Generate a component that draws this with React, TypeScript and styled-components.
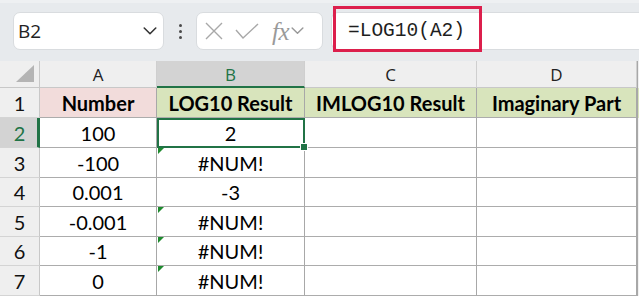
import React from "react";
import styled, { createGlobalStyle } from "styled-components";

const Global = createGlobalStyle`
  html, body {
    margin: 0;
    padding: 0;
    overflow: hidden;
    background: #ffffff;
  }
`;

const GREEN = "#217346";
const CELL_FONT = `Lato, "Liberation Sans", sans-serif`;

const Page = styled.div`
  width: 639px;
  height: 298px;
  display: flex;
  flex-direction: column;
  background: #fff;
`;

const Toolbar = styled.div`
  position: relative;
  height: 61px;
  flex: none;
  box-sizing: border-box;
  display: flex;
  align-items: flex-start;
  padding: 9px 0 0 13px;
  background: #e7eaed;
  border-top: 3px solid #eef0f2;
`;

const NameBox = styled.div`
  width: 151px;
  height: 38px;
  box-sizing: border-box;
  display: flex;
  align-items: center;
  justify-content: space-between;
  padding: 0 6px 0 4px;
  background: #fff;
  border: 1px solid #d9dcdf;
  border-radius: 7px;
  font: 19px "Open Sans", sans-serif;
  color: #222;
`;

const Dots = styled.div`
  width: 32px;
  height: 38px;
  display: flex;
  flex-direction: column;
  align-items: center;
  justify-content: center;
  gap: 3px;
  span {
    width: 3px;
    height: 3px;
    border-radius: 50%;
    background: #4a4a4a;
  }
`;

const FxBox = styled.div`
  width: 127px;
  height: 38px;
  box-sizing: border-box;
  display: flex;
  align-items: center;
  gap: 12px;
  padding-left: 8px;
  background: #fff;
  border: 1px solid #d9dcdf;
  border-radius: 7px;
`;

const Fx = styled.span`
  font: italic 25px "Liberation Serif", "DejaVu Serif", serif;
  color: #9a9a9a;
  margin-left: 1px;
  margin-right: -10px;
  letter-spacing: -0.5px;
  line-height: 1;
`;

const FormulaBox = styled.div`
  margin-left: 8px;
  flex: 1;
  height: 38px;
  box-sizing: border-box;
  display: flex;
  align-items: center;
  padding-left: 16px;
  background: #fff;
  border: 1px solid #d9dcdf;
  border-right: none;
  border-radius: 7px 0 0 7px;
  font: 19.5px "Liberation Mono", "DejaVu Sans Mono", monospace;
  color: #1e1e1e;
`;

const Highlight = styled.div`
  position: absolute;
  left: 333px;
  top: 3px;
  width: 149px;
  height: 46px;
  box-sizing: border-box;
  border: 3px solid #dc1f4c;
  pointer-events: none;
`;

const Sheet = styled.div`
  display: grid;
  grid-template-columns: 40px 117px 148px 172px 160px 2px;
  grid-template-rows: 27px 30px 30px 30px 29px 30px 29px 30px;
`;

const Corner = styled.div`
  position: relative;
  background: #efefef;
  border-right: 1px solid #c8c8c8;
  border-bottom: 1px solid #c8c8c8;
  box-sizing: border-box;
  &::after {
    content: "";
    position: absolute;
    right: 5px;
    bottom: 5px;
    width: 0;
    height: 0;
    border-left: 18px solid transparent;
    border-bottom: 17px solid #b4b4b4;
  }
`;

const ColHead = styled.div<{ $active?: boolean }>`
  box-sizing: border-box;
  display: flex;
  align-items: center;
  justify-content: center;
  background: ${(p) => (p.$active ? "#d3d3d3" : "#efefef")};
  color: ${(p) => (p.$active ? GREEN : "#222")};
  border-right: 1px solid #cfcfcf;
  border-bottom: ${(p) => (p.$active ? `2px solid ${GREEN}` : "1px solid #c8c8c8")};
  font: 17px "Open Sans", sans-serif;
  padding-top: 1px;
`;

const RowHead = styled.div<{ $active?: boolean }>`
  box-sizing: border-box;
  display: flex;
  align-items: center;
  justify-content: center;
  background: ${(p) => (p.$active ? "#d3d3d3" : "#efefef")};
  color: ${(p) => (p.$active ? GREEN : "#111")};
  border-right: ${(p) => (p.$active ? `3px solid ${GREEN}` : "1px solid #c8c8c8")};
  border-bottom: 1px solid #d4d4d4;
  font: 20px ${CELL_FONT};
  padding-left: ${(p) => (p.$active ? "2px" : "0")};
`;

const Cell = styled.div<{ $fill?: string; $bold?: boolean; $flag?: boolean }>`
  position: relative;
  box-sizing: border-box;
  display: flex;
  align-items: center;
  justify-content: center;
  background: ${(p) => p.$fill || "#fff"};
  border-right: 1px solid #a8a8a8;
  border-bottom: 1px solid #acacac;
  font: ${(p) => (p.$bold ? 700 : 400)} 20px ${CELL_FONT};
  color: #000;
  white-space: nowrap;
  &::before {
    content: "";
    display: ${(p) => (p.$flag ? "block" : "none")};
    position: absolute;
    left: 1px;
    top: 0;
    border-top: 6px solid #1e8a2e;
    border-right: 6px solid transparent;
  }
`;

const Selected = styled(Cell)`
  outline: 2px solid ${GREEN};
  outline-offset: -2px;
  z-index: 1;
  &::after {
    content: "";
    position: absolute;
    right: -4px;
    bottom: -4px;
    width: 6px;
    height: 6px;
    background: ${GREEN};
    border: 1px solid #fff;
  }
`;

const Edge = styled.div<{ $fill?: string }>`
  background: ${(p) => p.$fill || "#f2f2f2"};
  border-left: 1px solid #a8a8a8;
`;

const Chevron = ({ color, size }: { color: string; size: number }) => (
  <svg width={size} height={size * 0.55} viewBox="0 0 14 8" fill="none">
    <path d="M1 1l6 6 6-6" stroke={color} strokeWidth="1.6" strokeLinecap="round" strokeLinejoin="round" />
  </svg>
);

const rows: { n: string; a: string; flag: boolean }[] = [
  { n: "100", a: "2", flag: false },
  { n: "-100", a: "#NUM!", flag: true },
  { n: "0.001", a: "-3", flag: false },
  { n: "-0.001", a: "#NUM!", flag: true },
  { n: "-1", a: "#NUM!", flag: true },
  { n: "0", a: "#NUM!", flag: true },
];

export default function App() {
  return (
    <Page>
      <Global />
      <Toolbar>
        <NameBox>
          <span>B2</span>
          <Chevron color="#333" size={14} />
        </NameBox>
        <Dots>
          <span />
          <span />
          <span />
        </Dots>
        <FxBox>
          <svg width="18" height="18" viewBox="0 0 18 18">
            <path d="M1 1l16 16M17 1L1 17" stroke="#a8a8a8" strokeWidth="1.4" />
          </svg>
          <svg width="24" height="16" viewBox="0 0 24 16" fill="none">
            <path d="M1 7l7 8L23 1" stroke="#a8a8a8" strokeWidth="1.4" />
          </svg>
          <Fx>fx</Fx>
          <Chevron color="#999" size={13} />
        </FxBox>
        <FormulaBox>=LOG10(A2)</FormulaBox>
        <Highlight />
      </Toolbar>
      <Sheet>
        <Corner />
        <ColHead>A</ColHead>
        <ColHead $active>B</ColHead>
        <ColHead>C</ColHead>
        <ColHead>D</ColHead>
        <Edge $fill="#efefef" />

        <RowHead>1</RowHead>
        <Cell $fill="#f2dcdb" $bold>Number</Cell>
        <Cell $fill="#d8e4bc" $bold>LOG10 Result</Cell>
        <Cell $fill="#d8e4bc" $bold>IMLOG10 Result</Cell>
        <Cell $fill="#d8e4bc" $bold>Imaginary Part</Cell>
        <Edge $fill="#d8e4bc" />

        {rows.map((r, i) => {
          const idx = i + 2;
          const Res = idx === 2 ? Selected : Cell;
          return (
            <React.Fragment key={idx}>
              <RowHead $active={idx === 2}>{idx}</RowHead>
              <Cell>{r.n}</Cell>
              <Res $flag={r.flag}>{r.a}</Res>
              <Cell />
              <Cell />
              <Edge />
            </React.Fragment>
          );
        })}
      </Sheet>
    </Page>
  );
}
